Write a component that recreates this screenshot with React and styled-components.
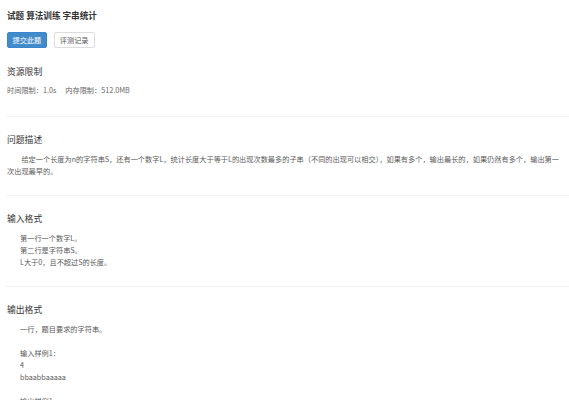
import React from 'react';
import styled, { createGlobalStyle } from 'styled-components';

const GlobalStyle = createGlobalStyle`
  html, body {
    margin: 0;
    padding: 0;
    background: #fff;
  }
  body {
    font-family: "Noto Sans CJK SC", "Noto Sans", sans-serif;
    color: #555;
  }
`;

const Page = styled.div`
  padding: 8px 0 0 7px;
`;

const Title = styled.h1`
  margin: 0;
  font-size: 8.6px;
  line-height: 14px;
  font-weight: 700;
  color: #333;
`;

const Toolbar = styled.div`
  display: flex;
  gap: 7px;
  margin-top: 10px;
`;

const Button = styled.button`
  height: 16px;
  padding: 0 ${(p) => (p.$primary ? '4.5px' : '5px')};
  font-family: inherit;
  font-size: 7.2px;
  line-height: 14px;
  border-radius: 2px;
  border: 1px solid ${(p) => (p.$primary ? '#3a85cf' : '#ddd')};
  background: ${(p) => (p.$primary ? '#428bca' : '#fff')};
  color: ${(p) => (p.$primary ? '#fff' : '#555')};
  cursor: pointer;
`;

const Heading = styled.h2`
  margin: ${(p) => (p.$first ? '17px' : '16px')} 0 0;
  font-size: 8.8px;
  line-height: 14px;
  font-weight: 400;
  color: #333;
`;

const Meta = styled.div`
  margin-top: 5px;
  font-size: 7.2px;
  line-height: 12px;
  color: #666;

  span + span {
    margin-left: 9px;
  }
`;

const Rule = styled.hr`
  margin: ${(p) => (p.$top ? '20px' : '18px')} 0 0 -1px;
  border: 0;
  border-top: 1px solid #f0f0f0;
`;

const Body = styled.div`
  margin-top: 6px;
  padding-right: 4px;
  padding-left: ${(p) => (p.$indented ? '13px' : '0')};
  font-size: 7.2px;
  line-height: 12px;
  color: #5a5a5a;
`;

const Para = styled.p`
  margin: 0;
  text-indent: ${(p) => (p.$indent ? '2em' : '0')};
  min-height: 12px;
`;

export default function App() {
  return (
    <Page>
      <GlobalStyle />
      <Title>试题 算法训练 字串统计</Title>
      <Toolbar>
        <Button $primary>提交此题</Button>
        <Button>评测记录</Button>
      </Toolbar>

      <Heading $first>资源限制</Heading>
      <Meta>
        <span>时间限制：1.0s</span>
        <span>内存限制：512.0MB</span>
      </Meta>
      <Rule $top />

      <Heading>问题描述</Heading>
      <Body>
        <Para $indent>
          给定一个长度为n的字符串S，还有一个数字L，统计长度大于等于L的出现次数最多的子串（不同的出现可以相交），如果有多个，输出最长的，如果仍然有多个，输出第一次出现最早的。
        </Para>
      </Body>
      <Rule />

      <Heading>输入格式</Heading>
      <Body $indented>
        <Para>第一行一个数字L。</Para>
        <Para>第二行是字符串S。</Para>
        <Para>L大于0，且不超过S的长度。</Para>
      </Body>
      <Rule />

      <Heading>输出格式</Heading>
      <Body $indented>
        <Para>一行，题目要求的字符串。</Para>
        <Para />
        <Para>输入样例1：</Para>
        <Para>4</Para>
        <Para>bbaabbaaaaa</Para>
        <Para />
        <Para>输出样例1：</Para>
        <Para>bbaa</Para>
      </Body>
    </Page>
  );
}
